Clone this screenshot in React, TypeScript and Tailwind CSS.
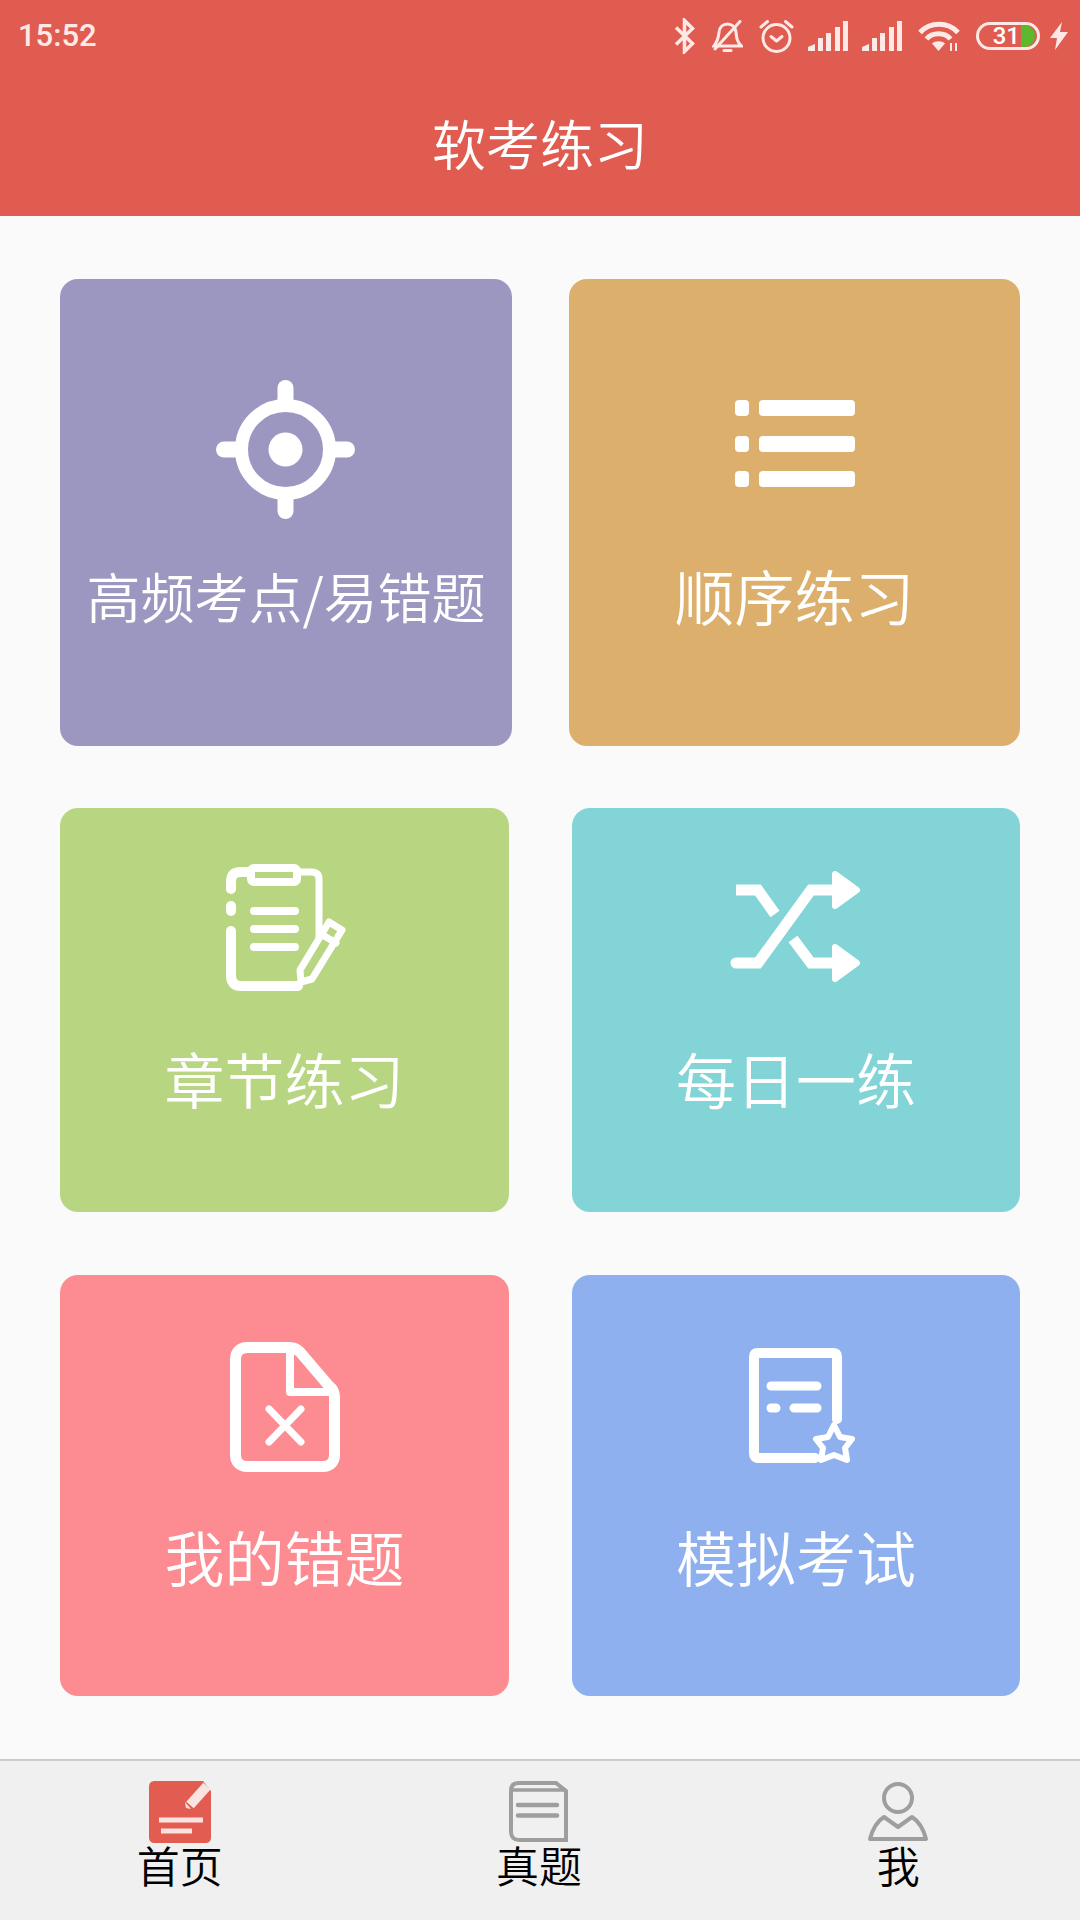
import type { ReactNode } from "react";

function StatusIcons() {
  return (
    <div className="flex items-center text-[#ffe9e6]">
      {/* bluetooth */}
      <svg width="21" height="36" viewBox="0 0 21 36" fill="none" stroke="currentColor" strokeWidth="3.5">
        <path d="M2 9.5 L18.5 25.5 L10.5 33.5 V2.5 L18.5 10.5 L2 26.5" />
      </svg>
      {/* muted bell */}
      <svg className="ml-[17px]" width="31" height="33" viewBox="0 0 31 33" fill="none" stroke="currentColor" strokeWidth="3" strokeLinecap="round">
        <path d="M2 26 C6 21 6.5 17 7 12.5 C7.5 7 11 4 15.5 4 C20 4 23.5 7 24 12 C24.5 18 25 22 29.5 26 Z" />
        <path d="M28 1.5 L3 29" />
        <path d="M12 30.5 H19" />
      </svg>
      {/* alarm */}
      <svg className="ml-[16px]" width="35" height="34" viewBox="0 0 35 34" fill="none" stroke="currentColor" strokeWidth="3" strokeLinecap="round" strokeLinejoin="round">
        <circle cx="17.5" cy="19" r="13.5" />
        <path d="M12 17.5 L17.5 22 L23 17.5" />
        <path d="M2 8 L8.5 2.5" />
        <path d="M33 8 L26.5 2.5" />
      </svg>
      <SignalBars className="ml-[14px]" />
      <SignalBars className="ml-[14px]" />
      {/* wifi */}
      <svg className="ml-[16px]" width="42" height="30" viewBox="0 0 42 30" fill="none" stroke="currentColor" strokeWidth="5">
        <path d="M2 11.5 C12 0.5 30 0.5 40 11.5" />
        <path d="M8.5 18 C14 11 27 11 32.5 18" />
        <path d="M20.5 30 L14 22.5 C17 19.5 24 19.5 27 22.5 Z" fill="currentColor" stroke="none" />
        <path d="M33 22 V30 M38 22 V30" strokeWidth="2" />
      </svg>
      {/* battery */}
      <div className="relative ml-[16px] flex h-[28px] w-[64px] items-center overflow-hidden rounded-full border-[3px] border-[#ffe9e6]">
        <span className="w-[41px] text-right font-['Roboto',sans-serif] text-[24px] leading-none font-medium text-white">31</span>
        <div className="ml-[1px] h-full w-[14px] rounded-r-full bg-[#5cb82c]" />
      </div>
      {/* charging bolt */}
      <svg className="ml-[10px]" width="18" height="28" viewBox="0 0 18 28" fill="currentColor">
        <path d="M12 0 L0 16 H7 L5 28 L18 10 H10 Z" />
      </svg>
    </div>
  );
}

function SignalBars({ className }: { className: string }) {
  return (
    <svg className={className} width="40" height="30" viewBox="0 0 40 30" fill="currentColor">
      <path d="M0 30 V26 L7 23 V30 Z" />
      <rect x="10" y="17" width="5" height="13" />
      <rect x="18" y="12" width="5" height="18" />
      <rect x="27" y="6" width="5" height="24" />
      <rect x="35" y="0" width="5" height="30" />
    </svg>
  );
}

function TargetIcon() {
  return (
    <svg className="-ml-[2px]" width="139" height="139" viewBox="0 0 139 139" fill="white">
      <circle cx="69.5" cy="69.5" r="44" fill="none" stroke="white" strokeWidth="13" />
      <circle cx="69.5" cy="69.5" r="17" />
      <rect x="61.5" y="0" width="16" height="30" rx="8" />
      <rect x="61.5" y="109" width="16" height="30" rx="8" />
      <rect x="0" y="61.5" width="30" height="16" rx="8" />
      <rect x="109" y="61.5" width="30" height="16" rx="8" />
    </svg>
  );
}

function ListIcon() {
  return (
    <svg className="mt-[20px]" width="120" height="87" viewBox="0 0 120 87" fill="white">
      <rect x="0" y="0" width="14" height="16" rx="4" />
      <rect x="24" y="0" width="96" height="16" rx="4" />
      <rect x="0" y="36" width="14" height="16" rx="4" />
      <rect x="24" y="36" width="96" height="16" rx="4" />
      <rect x="0" y="71" width="14" height="16" rx="4" />
      <rect x="24" y="71" width="96" height="16" rx="4" />
    </svg>
  );
}

function ClipboardIcon() {
  return (
    <svg className="ml-[4px]" width="122" height="128" viewBox="0 0 122 128" fill="none" stroke="white" strokeWidth="10" strokeLinecap="round" strokeLinejoin="round">
      <path d="M5 25 V18 C5 11 8 8 15 8 H22" />
      <path d="M74 8 H85 C90 8 93 10 93 15 V73" strokeWidth="7" />
      <path d="M72 122 H15 C8 122 5 118 5 112 V67" />
      <path d="M5 42 V47" />
      <rect x="25" y="4" width="46" height="14" rx="3" strokeWidth="8" />
      <path d="M28 47 H69 M28 65 H69 M28 83 H69" strokeWidth="8" />
      <path d="M103 58 L116 66 L86 115 L75 118 L74 106 Z" strokeWidth="7" />
      <path d="M95 70 L110 79" strokeWidth="7" />
      <path d="M91 86 L100 91 L84 110 Z" stroke="none" />
    </svg>
  );
}

function ShuffleIcon() {
  return (
    <svg className="mt-[7px]" width="132" height="112" viewBox="0 0 132 112" fill="none" stroke="white" strokeWidth="11" strokeLinecap="round">
      <path d="M6 19 H28 L45 43" strokeLinecap="butt" />
      <path d="M6 92 H28 L81 19 H104" />
      <path d="M63 68 L81 92 H104" strokeLinecap="butt" />
      <path d="M105 3 V35 L127 19 Z" fill="white" strokeWidth="6" strokeLinejoin="round" />
      <path d="M105 76 V108 L127 92 Z" fill="white" strokeWidth="6" strokeLinejoin="round" />
    </svg>
  );
}

function FileErrorIcon() {
  return (
    <svg width="110" height="130" viewBox="0 0 110 130" fill="none" stroke="white" strokeWidth="11" strokeLinecap="round" strokeLinejoin="round">
      <path d="M17 5.5 H60 C64 5.5 67 7 70 10 L99 44 C103 47 104.5 51 104.5 55 V113 C104.5 120 100 124.5 93 124.5 H17 C10 124.5 5.5 120 5.5 113 V17 C5.5 10 10 5.5 17 5.5 Z" />
      <path d="M60 6 V50 H103" strokeWidth="8" />
      <path d="M39 67 L71 100 M71 67 L39 100" strokeWidth="7" />
    </svg>
  );
}

function DocStarIcon() {
  return (
    <svg className="mt-[6px] ml-[12px]" width="106" height="116" viewBox="0 0 106 116" fill="none" stroke="white" strokeWidth="10" strokeLinecap="round" strokeLinejoin="round">
      <path d="M66 110 H9 C6 110 5 108 5 105 V9 C5 6 6 5 9 5 H84 C87 5 88 6 88 9 V71" />
      <path d="M22 38 H68 M45 60 H68" strokeWidth="9" />
      <path d="M22 60 H27" strokeWidth="9" />
      <path d="M85 77 L91 89 L103 91 L96 100 L98 112 L85 107 L72 112 L74 100 L67 91 L79 89 Z" strokeWidth="6" />
    </svg>
  );
}

function HomeTabIcon() {
  return (
    <svg width="62" height="62" viewBox="0 0 62 62" fill="#e25c52">
      <path d="M6 0 H54 L62 10 V56 C62 60 60 62 56 62 H6 C2 62 0 60 0 56 V6 C0 2 2 0 6 0 Z" />
      <path d="M58 5 L41 24" stroke="#fbe3df" strokeWidth="10" />
      <path d="M36 21 L37 27 L42 28 Z" fill="#fbe3df" />
      <path d="M10 39 H54 M12 50 H43" stroke="#fbe3df" strokeWidth="5" />
    </svg>
  );
}

function BookTabIcon() {
  return (
    <svg width="59" height="61" viewBox="0 0 59 61" fill="none" stroke="#9e9e9e" strokeWidth="4">
      <path d="M2 10 C2 4 5 2 9 2 H47 L57 10 V59 H10 C5 59 2 56 2 51 Z" />
      <path d="M2 9 H57" strokeWidth="3.5" />
      <path d="M9 24 H48 M9 34.5 H48" strokeWidth="4.5" strokeLinecap="round" />
    </svg>
  );
}

function PersonTabIcon() {
  return (
    <svg width="60" height="60" viewBox="0 0 60 60" fill="none" stroke="#9e9e9e" strokeWidth="4">
      <circle cx="30" cy="17" r="14" />
      <path d="M16 36 L30 46 L44 36 C52 41 56 50 58 58 H2 C4 50 8 41 16 36 Z" strokeLinejoin="round" />
    </svg>
  );
}

type CardProps = {
  bg: string;
  size: string;
  pad: string;
  iconBox: string;
  label: string;
  labelText?: string;
  icon: ReactNode;
};

function Card({ bg, size, pad, iconBox, label, labelText = "text-[60px]", icon }: CardProps) {
  return (
    <div className={`flex flex-col items-center rounded-[18px] ${bg} ${size} ${pad}`}>
      <div className={`flex items-start justify-center ${iconBox}`}>{icon}</div>
      <div className={`leading-[80px] font-[350] whitespace-nowrap text-white ${labelText}`}>{label}</div>
    </div>
  );
}

function Tab({ icon, label }: { icon: ReactNode; label: string }) {
  return (
    <div className="flex flex-col items-center">
      <div className="flex h-[64px] items-start">{icon}</div>
      <div className="-mt-[6px] text-[43px] leading-[50px] font-[350] text-black">{label}</div>
    </div>
  );
}

export default function App() {
  return (
    <div className="flex h-[1920px] w-[1080px] flex-col bg-[#fafafa] font-['Noto_Sans_CJK_SC','Noto_Sans',sans-serif]">
      <header className="h-[216px] bg-[#e05c51]">
        <div className="flex h-[72px] items-center justify-between pr-[12px] pl-[18px]">
          <span className="font-['Roboto',sans-serif] text-[31px] font-medium text-[#ffe9e6]">15:52</span>
          <StatusIcons />
        </div>
        <h1 className="-mt-[1px] text-center text-[54px] leading-[144px] font-[350] text-white">软考练习</h1>
      </header>

      <main className="flex-1 px-[60px]">
        <div className="mt-[63px] flex justify-between">
          <Card bg="bg-[#9b97c1]" size="h-[467px] w-[452px]" pad="pt-[101px]" iconBox="h-[176px]" label="高频考点/易错题" labelText="text-[54px]" icon={<TargetIcon />} />
          <Card bg="bg-[#dcb06c]" size="h-[467px] w-[451px]" pad="pt-[101px]" iconBox="h-[175px]" label="顺序练习" icon={<ListIcon />} />
        </div>
        <div className="mt-[62px] flex justify-between">
          <Card bg="bg-[#b8d681]" size="h-[404px] w-[449px]" pad="pt-[56px]" iconBox="h-[174px]" label="章节练习" icon={<ClipboardIcon />} />
          <Card bg="bg-[#82d4d6]" size="h-[404px] w-[448px]" pad="pt-[56px]" iconBox="h-[174px]" label="每日一练" icon={<ShuffleIcon />} />
        </div>
        <div className="mt-[63px] flex justify-between">
          <Card bg="bg-[#fc8c91]" size="h-[421px] w-[449px]" pad="pt-[67px]" iconBox="h-[174px]" label="我的错题" icon={<FileErrorIcon />} />
          <Card bg="bg-[#8eb0ee]" size="h-[421px] w-[448px]" pad="pt-[67px]" iconBox="h-[174px]" label="模拟考试" icon={<DocStarIcon />} />
        </div>
      </main>

      <nav className="grid h-[161px] grid-cols-3 border-t-2 border-[#cccccc] bg-[#f0f0f0] pt-[20px] pr-[2px]">
        <Tab icon={<HomeTabIcon />} label="首页" />
        <Tab icon={<BookTabIcon />} label="真题" />
        <Tab icon={<PersonTabIcon />} label="我" />
      </nav>
    </div>
  );
}
